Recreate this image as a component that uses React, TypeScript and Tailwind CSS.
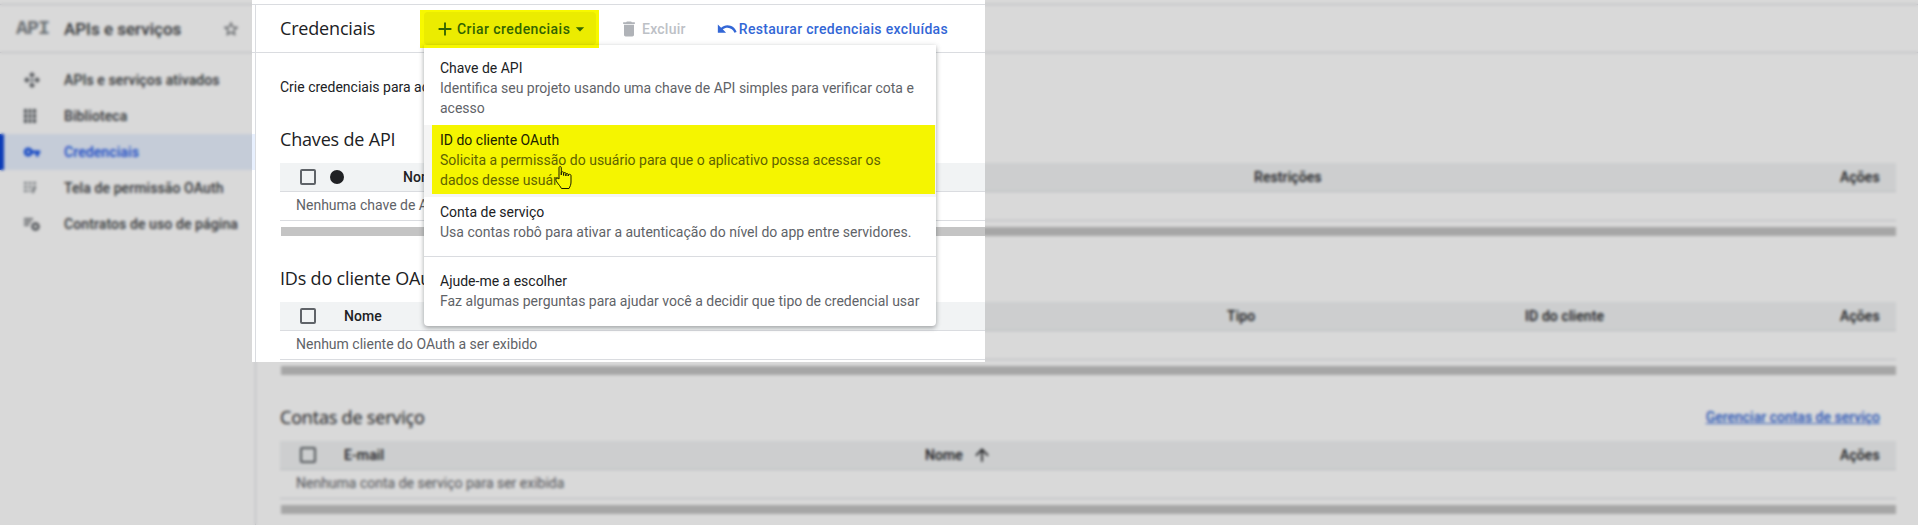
import React from "react";
import { MdAdd, MdArrowDropDown, MdArrowUpward, MdDelete, MdStarBorder, MdUndo, MdVpnKey } from "react-icons/md";

function Checkbox() {
  return <span className="block w-4 h-4 border-2 border-[#5f6368] rounded-[2px]" />;
}

function ApisIcon() {
  return (
    <svg width="18" height="18" viewBox="0 0 18 18" fill="#5f6368">
      <path d="M9 1l3 3-3 2.500L6 4zM9 17l-3-3 3-2.500 3 3zM1 9l3-3 2.500 3L4 12zM17 9l-3 3-2.500-3L14 6z" />
      <circle cx="9" cy="9" r="2" fill="#9aa0a6" />
    </svg>
  );
}

function LibraryIcon() {
  return (
    <svg width="14" height="16" viewBox="0 0 14 16" fill="#5f6368">
      <path d="M1 1h3v4H1zM5.500 1h3v4h-3zM10 1h3v4h-3zM1 6h3v4H1zM5.500 6h3v4h-3zM10 6h3v4h-3zM1 11h3v4H1zM5.500 11h3v4h-3zM10 11h3v4h-3z" />
    </svg>
  );
}

function ConsentIcon() {
  return (
    <svg width="14" height="14" viewBox="0 0 14 14" fill="#80868b">
      <path d="M1 1h3v2H1zM5.500 1h3v2h-3zM10 1h3v2h-3zM1 5h3v2H1zM5.500 5h3v2h-3zM10 5h3v2h-3zM1 9h3v2H1zM5.500 9h2v2h-2zM9 8l4-1-3 6-1-2z" />
    </svg>
  );
}

function ContractIcon() {
  return (
    <svg width="18" height="16" viewBox="0 0 18 16" fill="#5f6368">
      <path d="M1 2h9v2H1zM1 5h7v2H1zM1 8h5v2H1z" opacity="0.8" />
      <circle cx="12.500" cy="10.500" r="3" fill="none" stroke="#5f6368" strokeWidth="2.500" />
    </svg>
  );
}

function HandCursor() {
  return (
    <svg width="18" height="25" viewBox="0 0 18 25" fill="#f7f800" stroke="#1b1b00" strokeWidth="1" strokeLinejoin="round">
      <path d="M4 14V2.500C4 1.300 6.300 1.300 6.300 2.500V10V7.500C6.300 6.500 8.600 6.500 8.600 7.500V10.500V8.300C8.600 7.300 10.900 7.300 10.900 8.300V11V9.300C10.900 8.300 13.200 8.300 13.200 9.300V11V10C13.200 9 16 9 16 10.500V17C16 20 15 21.500 14 23.500H6.500C5.500 21.500 4 20 2.500 18C1.500 16.500 0.500 15 1 14C1.700 13 3 13 4 14Z" />
    </svg>
  );
}

const navItems = [
  { label: "APIs e serviços ativados", icon: <ApisIcon /> },
  { label: "Biblioteca", icon: <LibraryIcon /> },
  { label: "Credenciais", icon: <MdVpnKey size={18} className="text-[#1a56e8]" />, active: true },
  { label: "Tela de permissão OAuth", icon: <ConsentIcon /> },
  { label: "Contratos de uso de página", icon: <ContractIcon /> },
];

const menuItems = [
  {
    title: "Chave de API",
    desc: "Identifica seu projeto usando uma chave de API simples para verificar cota e acesso",
    cls: "h-[80px] pt-[13px]",
  },
  {
    title: "ID do cliente OAuth",
    desc: "Solicita a permissão do usuário para que o aplicativo possa acessar os dados desse usuário",
    cls: "h-[72px] pt-[5px] bg-[#f5f5f5]",
  },
  {
    title: "Conta de serviço",
    desc: "Usa contas robô para ativar a autenticação do nível do app entre servidores.",
    cls: "h-[60px] pt-[5px] border-b border-[#dadce0]",
  },
  {
    title: "Ajude-me a escolher",
    desc: "Faz algumas perguntas para ajudar você a decidir que tipo de credencial usar",
    cls: "h-[69px] pt-[14px]",
  },
];

function Title({ children }: { children: React.ReactNode }) {
  return <h2 className="text-[18px] leading-6 font-normal text-[#202124] font-['Open_Sans',sans-serif] tracking-[-0.18px]">{children}</h2>;
}

function DataTable({ head, grid, empty }: { head: React.ReactNode; grid: string; empty: string }) {
  return (
    <div className="mt-3">
      <div className={`h-[29px] pl-5 grid items-center bg-[#f1f3f4] border-b border-[#dadce0] text-sm font-medium tracking-[0.1px] text-[#202124] ${grid}`}>
        {head}
      </div>
      <div className="h-[29px] pl-4 pb-[2px] flex items-center border-b border-[#dadce0] text-sm text-[#5f6368]">{empty}</div>
      <div className="mt-1.5 ml-px h-[9px] bg-[#c4c4c4]" />
    </div>
  );
}

export default function App() {
  return (
    <div className="relative h-[525px] overflow-hidden bg-white font-['Roboto',sans-serif] text-sm">
      <div className="h-[5px] border-b border-[#dadce0]" />

      <div className="flex">
        {/* Side nav */}
        <aside className="w-[256px] h-[520px] shrink-0 border-r border-[#dadce0]">
          <div className="h-[48px] border-b border-[#dadce0] flex items-center pl-4 pr-[15px] pt-[1px]">
            <span className="w-12 font-['Liberation_Mono',monospace] font-bold text-[20px] text-[#80868b] tracking-[-1px]">API</span>
            <span className="flex-1 text-[17px] font-medium text-[#3c4043]">APIs e serviços</span>
            <MdStarBorder size={18} className="text-[#5f6368]" />
          </div>
          <nav className="pt-[9px]">
            {navItems.map((item) => (
              <div
                key={item.label}
                className={`h-9 flex items-center font-medium text-sm tracking-[0.1px] ${
                  item.active ? "bg-[#e8f0fe] text-[#1a56e8] border-l-4 border-[#0f47d8] pl-[19px]" : "text-[#3c4043] pl-[23px]"
                }`}
              >
                <span className="w-[41px] flex justify-start">{item.icon}</span>
                {item.label}
              </div>
            ))}
          </nav>
        </aside>

        <main className="flex-1 min-w-0">
          {/* Toolbar */}
          <div className="relative h-[48px] border-b border-[#dadce0] pl-6 flex items-center">
            <h1 className="w-[144px] text-[18px] text-[#202124] font-['Open_Sans',sans-serif] tracking-[-0.18px]">Credenciais</h1>
            <button className="h-[33px] w-[172px] rounded bg-[#f3f3f3] flex items-center pl-[10px] text-[#3367d6] font-medium tracking-[0.45px]">
              <MdAdd size={22} />
              <span className="ml-[1px]">Criar credenciais</span>
              <MdArrowDropDown size={20} />
            </button>
            <div className="ml-[23px] flex items-center text-[#bdc1c6] font-medium tracking-[0.25px]">
              <MdDelete size={20} className="text-[#b0b3b8]" />
              <span className="ml-[3px]">Excluir</span>
            </div>
            <div className="ml-[30px] flex items-center text-[#3367d6] font-medium tracking-[0.33px]">
              <MdUndo size={22} />
              <span className="ml-[1px]">Restaurar credenciais excluídas</span>
            </div>
          </div>

          {/* Content */}
          <div className="pl-6 pr-[22px] pt-6">
            <p className="leading-5 text-[#202124]">Crie credenciais para acessar suas APIs ativadas. Saiba mais</p>

            <div className="mt-[30px]">
              <Title>Chaves de API</Title>
              <DataTable
                grid="grid-cols-[30px_73px_851px_586px_1fr]"
                empty="Nenhuma chave de API a ser exibida"
                head={
                  <>
                    <Checkbox />
                    <span className="w-3.5 h-3.5 rounded-full bg-[#202124]" />
                    <span>Nome</span>
                    <span>Restrições</span>
                    <span>Ações</span>
                  </>
                }
              />
            </div>

            <div className="mt-[30px]">
              <Title>IDs do cliente OAuth 2.0</Title>
              <DataTable
                grid="grid-cols-[44px_883px_298px_315px_1fr]"
                empty="Nenhum cliente do OAuth a ser exibido"
                head={
                  <>
                    <Checkbox />
                    <span>Nome</span>
                    <span>Tipo</span>
                    <span>ID do cliente</span>
                    <span>Ações</span>
                  </>
                }
              />
            </div>

            <div className="mt-[30px]">
              <div className="flex items-center justify-between pr-4">
                <Title>Contas de serviço</Title>
                <a className="text-[#3367d6] font-medium underline">Gerenciar contas de serviço</a>
              </div>
              <DataTable
                grid="grid-cols-[44px_581px_915px_1fr]"
                empty="Nenhuma conta de serviço para ser exibida"
                head={
                  <>
                    <Checkbox />
                    <span>E-mail</span>
                    <span className="flex items-center gap-[9px]">
                      Nome <MdArrowUpward size={20} />
                    </span>
                    <span>Ações</span>
                  </>
                }
              />
            </div>
          </div>
        </main>
      </div>

      {/* Dropdown menu */}
      <div className="absolute left-[424px] top-[45px] w-[512px] bg-white rounded-b shadow-[0_2px_4px_rgba(60,64,67,0.35),0_1px_6px_rgba(60,64,67,0.15)]">
        {menuItems.map((item) => (
          <div key={item.title} className={`px-4 leading-5 ${item.cls}`}>
            <div className="text-[#202124]">{item.title}</div>
            <div className="text-[#5f6368]">{item.desc}</div>
          </div>
        ))}
      </div>

      {/* Dimmed and blurred page around the spotlight */}
      <div className="absolute inset-0 bg-black/15 backdrop-blur-[1.500px] [clip-path:polygon(0_0,252px_0,252px_362px,985px_362px,985px_0,100%_0,100%_100%,0_100%)]" />

      {/* Yellow marker highlights */}
      <div className="absolute left-[420px] top-[10px] w-[179px] h-[38px] bg-[#f7f800] mix-blend-multiply" />
      <div className="absolute left-[432px] top-[125px] w-[503px] h-[69px] bg-[#ffff00] mix-blend-multiply" />

      <div className="absolute left-[555px] top-[165px]">
        <HandCursor />
      </div>
    </div>
  );
}
